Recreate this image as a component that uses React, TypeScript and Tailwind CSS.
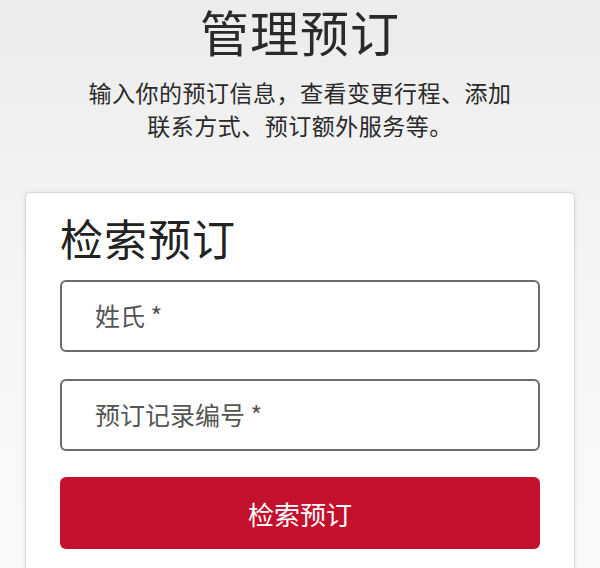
import * as React from "react";

const font = { fontFamily: '"Noto Sans CJK SC", "Noto Sans", sans-serif' };

export default function App() {
  return (
    <div
      style={font}
      className="min-h-[568px] w-[600px] overflow-hidden bg-gradient-to-b from-[#ececec] via-[#f6f6f6] to-[#fafafa] text-[#222]"
    >
      {/* Header */}
      <header className="flex flex-col items-center">
        <h1 className="text-[49px] font-normal leading-[62px] tracking-[1px] text-[#2a2a2a]">
          管理预订
        </h1>
        <p className="mt-[14px] text-center text-[23px] leading-[33px] tracking-[0.5px] text-[#2a2a2a]">
          输入你的预订信息，查看变更行程、添加
          <br />
          联系方式、预订额外服务等。
        </p>
      </header>

      {/* Retrieve booking card */}
      <section className="mx-[25px] mt-[50px] rounded-t-[6px] border border-[#d6d6d6] bg-white px-[34px] pb-[20px] pt-[18px] shadow-[0_0_6px_rgba(0,0,0,0.08)]">
        <h2 className="text-[43px] font-normal leading-[52px] tracking-[1px] text-[#222]">
          检索预订
        </h2>

        <div className="mt-[17px] flex flex-col gap-[27px]">
          <div className="flex h-[72px] items-center rounded-[6px] border-2 border-[#6b6b6b] px-[33px]">
            <span className="text-[25px] text-[#555]">姓氏 *</span>
          </div>
          <div className="flex h-[72px] items-center rounded-[6px] border-2 border-[#6b6b6b] px-[33px]">
            <span className="text-[25px] text-[#555]">预订记录编号 *</span>
          </div>
        </div>

        <button className="mt-[26px] flex h-[72px] w-full items-center justify-center rounded-[6px] bg-[#c3102c] text-[26px] text-white">
          检索预订
        </button>
      </section>
    </div>
  );
}
